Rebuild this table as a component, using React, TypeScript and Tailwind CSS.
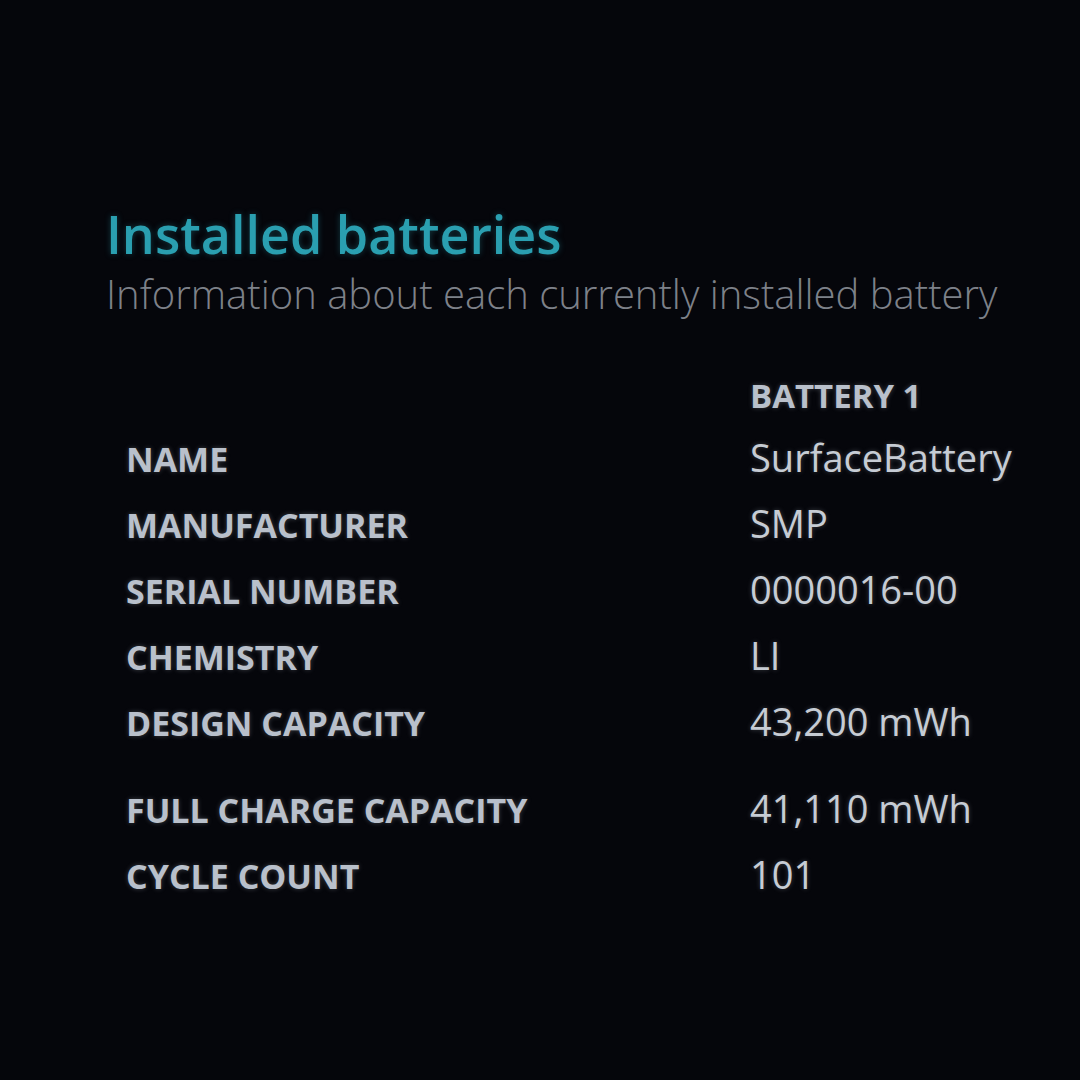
import React from "react";

const rows: { label: string; value: string; gap?: boolean }[] = [
    { label: "NAME", value: "SurfaceBattery" },
    { label: "MANUFACTURER", value: "SMP" },
    { label: "SERIAL NUMBER", value: "0000016-00" },
    { label: "CHEMISTRY", value: "LI" },
    { label: "DESIGN CAPACITY", value: "43,200 mWh" },
    { label: "FULL CHARGE CAPACITY", value: "41,110 mWh", gap: true },
    { label: "CYCLE COUNT", value: "101" },
];

export default function App() {
    return (
        <div
            className="h-[1080px] w-[1080px] overflow-hidden bg-[#05060b] pl-[106px] pt-[204px]"
            style={{ fontFamily: '"Open Sans", "Noto Sans", sans-serif' }}
        >
            {/* Header */}
            <h1 className="text-[52px] font-semibold leading-[60px] text-[#2a9fb0] [text-shadow:0_0_6px_rgba(42,159,176,0.35)]">
                Installed batteries
            </h1>
            <p className="mt-[4px] text-[40px] font-light leading-[52px] text-[#7d8189]">
                Information about each currently installed battery
            </p>

            {/* Table */}
            <div className="mt-[48px] grid grid-cols-[624px_1fr] items-baseline pl-[20px] text-[#b9c0cb] [text-shadow:0_0_5px_rgba(185,192,203,0.3)]">
                <div />
                <div className="text-[33px] font-bold leading-[56px]">BATTERY 1</div>
                {rows.map((r) => (
                    <React.Fragment key={r.label}>
                        <div className={`text-[34px] font-bold leading-[40px] ${r.gap ? "mt-[21px]" : ""}`}>
                            {r.label}
                        </div>
                        <div
                            className={`text-[38px] leading-[66px] text-[#c6ccd4] ${r.gap ? "mt-[21px]" : ""}`}
                        >
                            {r.value}
                        </div>
                    </React.Fragment>
                ))}
            </div>
        </div>
    );
}
